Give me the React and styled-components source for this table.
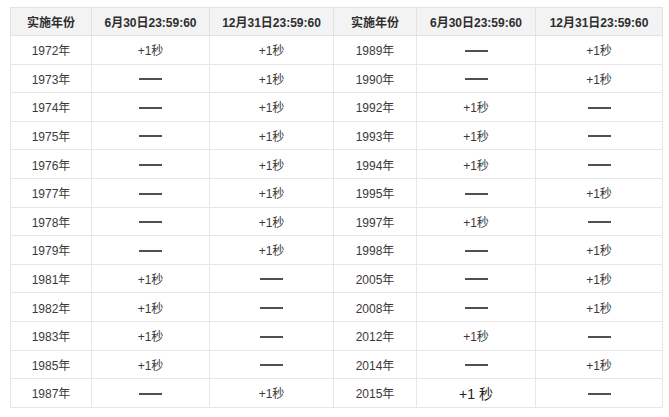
import React from 'react'
import styled, { createGlobalStyle } from 'styled-components'

const GlobalStyle = createGlobalStyle`
  html, body {
    margin: 0;
    padding: 0;
    background: #fff;
  }
  body {
    font-family: "Liberation Sans", Arial, "Noto Sans CJK SC", sans-serif;
  }
`

const Page = styled.div`
  padding: 7px 0 0 10px;
`

const Table = styled.table`
  border-collapse: collapse;
  table-layout: fixed;
  width: 652px;
  border: 1px solid #e2e2e2;
`

const HeadRow = styled.tr`
  height: 28px;
  background: #f3f3f3;
`

const Row = styled.tr`
  height: 28.6px;
`

const HeadCell = styled.th`
  border: 1px solid #e2e2e2;
  padding: 0;
  font-size: 12px;
  font-weight: bold;
  color: #2e2e2e;
  text-align: center;
`

const Cell = styled.td`
  border: 1px solid #e6e6e6;
  padding: 0;
  font-size: ${p => (p.$big ? '14px' : '12px')};
  color: ${p => (p.$big ? '#222' : '#3a3a3a')};
  text-align: center;
`

const Dash = styled.span`
  display: inline-block;
  width: 23px;
  height: 2px;
  background: #505050;
  vertical-align: middle;
`

const widths = [81, 118, 124, 83, 119, 127]

const heads = ['实施年份', '6月30日23:59:60', '12月31日23:59:60', '实施年份', '6月30日23:59:60', '12月31日23:59:60']

// [year, jun, dec, year, jun, dec]; 1 = +1秒, 0 = dash
const rows = [
  ['1972', 1, 1, '1989', 0, 1],
  ['1973', 0, 1, '1990', 0, 1],
  ['1974', 0, 1, '1992', 1, 0],
  ['1975', 0, 1, '1993', 1, 0],
  ['1976', 0, 1, '1994', 1, 0],
  ['1977', 0, 1, '1995', 0, 1],
  ['1978', 0, 1, '1997', 1, 0],
  ['1979', 0, 1, '1998', 0, 1],
  ['1981', 1, 0, '2005', 0, 1],
  ['1982', 1, 0, '2008', 0, 1],
  ['1983', 1, 0, '2012', 1, 0],
  ['1985', 1, 0, '2014', 0, 1],
  ['1987', 0, 1, '2015', 2, 0]
]

const Value = ({ v }) => {
  if (v === 0) return <Dash />
  if (v === 2) return '+1 秒'
  return '+1秒'
}

export default function App() {
  return (
    <Page>
      <GlobalStyle />
      <Table>
        <colgroup>
          {widths.map((w, i) => <col key={i} style={{ width: w }} />)}
        </colgroup>
        <thead>
          <HeadRow>
            {heads.map((h, i) => <HeadCell key={i}>{h}</HeadCell>)}
          </HeadRow>
        </thead>
        <tbody>
          {rows.map(r => (
            <Row key={r[0]}>
              <Cell>{r[0]}年</Cell>
              <Cell><Value v={r[1]} /></Cell>
              <Cell><Value v={r[2]} /></Cell>
              <Cell>{r[3]}年</Cell>
              <Cell $big={r[4] === 2}><Value v={r[4]} /></Cell>
              <Cell><Value v={r[5]} /></Cell>
            </Row>
          ))}
        </tbody>
      </Table>
    </Page>
  )
}
